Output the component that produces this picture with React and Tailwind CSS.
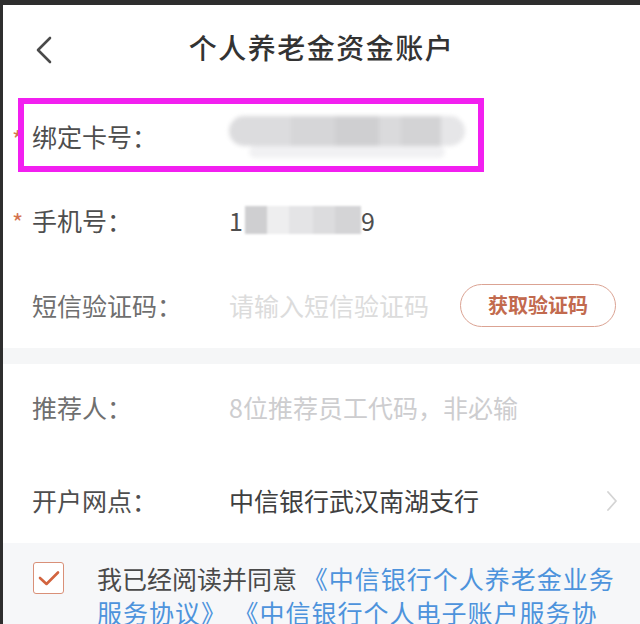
import React from "react";

const FONT = { fontFamily: '"Noto Sans CJK SC", "Noto Sans", sans-serif' };

// ─── Small pieces ─────────────────────────────────────────────────────────────

function Divider() {
  return <div className="ml-[29px] h-px bg-[#ececec]" />;
}

function Label({ children, required, muted }) {
  return (
    <div className="w-[226px] shrink-0 flex items-center pl-[9px]">
      <span className="w-[20px] text-[24px] leading-none text-[#d4734f] pt-1">
        {required ? "*" : ""}
      </span>
      <span
        className={[
          "text-[25px] leading-none",
          muted ? "text-[#6f6f6f]" : "text-[#4e4e4e]",
        ].join(" ")}
      >
        {children}
      </span>
    </div>
  );
}

// Blurred (masked) card number
function MaskedCard() {
  return (
    <div className="relative w-[236px] h-[46px] blur-[2px]">
      <div className="flex h-[30px] mt-[2px] rounded-full overflow-hidden">
        <div className="w-[62px] bg-[#dcdcde]" />
        <div className="w-[44px] bg-[#d6d6d8]" />
        <div className="w-[44px] bg-[#cfcfd1]" />
        <div className="w-[22px] bg-[#dadadc]" />
        <div className="w-[40px] bg-[#d3d3d5]" />
        <div className="flex-1 bg-[#e6e6e8]" />
      </div>
      <div className="h-[12px] mx-[20px] bg-[#f1f1f3] rounded-full" />
    </div>
  );
}

function MaskedPhone() {
  return (
    <div className="flex items-center text-[25px] leading-none text-[#4e4e4e]">
      <span className="mr-[2px]">1</span>
      <div className="flex h-[28px] blur-[1px]">
        <div className="w-[22px] bg-[#cfcfd1]" />
        <div className="w-[22px] bg-[#eeeeef]" />
        <div className="w-[24px] bg-[#e4e4e6]" />
        <div className="w-[22px] bg-[#dcdcde]" />
        <div className="w-[26px] bg-[#d4d4d6]" />
      </div>
      <span>9</span>
    </div>
  );
}

function CheckBox() {
  return (
    <div className="w-[31px] h-[32px] shrink-0 rounded-[3px] border-[1.5px] border-[#d99078] flex items-center justify-center bg-white">
      <svg width="22" height="16" viewBox="0 0 22 16" fill="none">
        <path
          d="M2 8 L8.5 14 L20 2.5"
          stroke="#d2643f"
          strokeWidth="2.6"
          strokeLinecap="round"
          strokeLinejoin="round"
        />
      </svg>
    </div>
  );
}

// ─── Page ─────────────────────────────────────────────────────────────────────

export default function App() {
  return (
    <div
      className="w-[640px] h-[624px] overflow-hidden bg-[#2e2e2e] pt-[5px] pl-[3px]"
      style={FONT}
    >
      <div className="relative h-full bg-white flex flex-col">
        {/* Header */}
        <div className="relative h-[90px] shrink-0 flex items-center justify-center pb-[6px]">
          <svg
            className="absolute left-[31px] top-[30px]"
            width="20"
            height="30"
            viewBox="0 0 20 30"
            fill="none"
          >
            <path
              d="M16 3 L4 15 L16 27"
              stroke="#4a4a4a"
              strokeWidth="2.6"
              strokeLinecap="round"
              strokeLinejoin="round"
            />
          </svg>
          <h1 className="text-[28px] leading-none font-medium text-[#333] tracking-[1.5px]">
            个人养老金资金账户
          </h1>
        </div>

        {/* 绑定卡号 */}
        <div className="h-[83px] shrink-0 flex items-center">
          <Label required>绑定卡号：</Label>
          <MaskedCard />
        </div>
        <Divider />

        {/* 手机号 */}
        <div className="h-[84px] shrink-0 flex items-center">
          <Label required>手机号：</Label>
          <MaskedPhone />
        </div>
        <Divider />

        {/* 短信验证码 */}
        <div className="h-[86px] shrink-0 flex items-center">
          <Label muted>短信验证码：</Label>
          <span className="text-[25px] leading-none text-[#dcdcdc]">
            请输入短信验证码
          </span>
          <button className="ml-[31px] w-[156px] h-[43px] rounded-full border-[1.5px] border-[#dba393] text-[20px] font-bold text-[#c26a4e] leading-none">
            获取验证码
          </button>
        </div>

        <div className="h-[16px] shrink-0 bg-[#f5f6f7]" />

        {/* 推荐人 */}
        <div className="h-[86px] shrink-0 flex items-center">
          <Label muted>推荐人：</Label>
          <span className="text-[25px] leading-none text-[#cdcdcf]">
            8位推荐员工代码，非必输
          </span>
        </div>
        <Divider />

        {/* 开户网点 */}
        <div className="h-[93px] shrink-0 flex items-center pt-[8px] pr-[22px]">
          <Label>开户网点：</Label>
          <span className="flex-1 text-[25px] leading-none text-[#3e3e3e]">
            中信银行武汉南湖支行
          </span>
          <svg width="12" height="22" viewBox="0 0 12 22" fill="none">
            <path
              d="M2 2 L10 11 L2 20"
              stroke="#d4d4d4"
              strokeWidth="1.8"
              strokeLinecap="round"
              strokeLinejoin="round"
            />
          </svg>
        </div>

        {/* Agreement */}
        <div className="flex-1 bg-[#f6f7f9] flex items-start pt-[19px] pl-[30px]">
          <CheckBox />
          <p className="ml-[33px] w-[528px] text-[25px] leading-[34px] text-[#4a4a4a] -mt-[1px] break-all">
            我已经阅读并同意{" "}
            <span className="text-[#4d93dc] tracking-[1px]">
              《中信银行个人养老金业务服务协议》 《中信银行个人电子账户服务协议》
            </span>
          </p>
        </div>

        {/* Annotation box */}
        <div className="absolute left-[15px] top-[93px] w-[466px] h-[74px] border-[6px] border-[#f21ff0]" />
      </div>
    </div>
  );
}
